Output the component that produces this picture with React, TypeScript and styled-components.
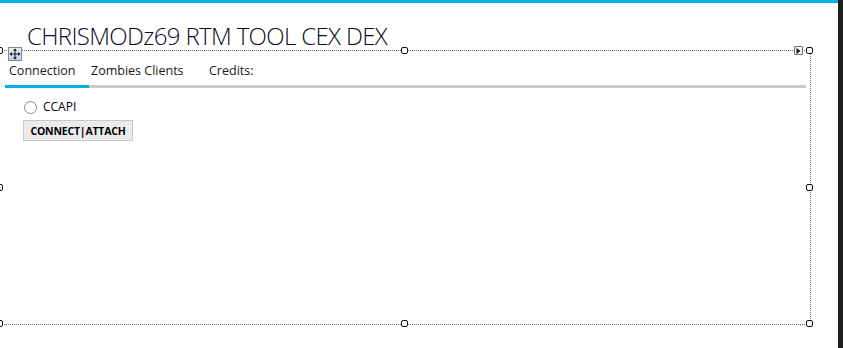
import React from "react";
import styled, { createGlobalStyle } from "styled-components";

const Global = createGlobalStyle`
  html, body { margin: 0; padding: 0; background: #ffffff; }
  body { font-family: "Open Sans", "Noto Sans", sans-serif; color: #000; }
`;

const Screen = styled.div`
  display: grid;
  grid-template-columns: 1fr 5px;
  width: 843px;
  height: 348px;
  overflow: hidden;
`;

const DarkStrip = styled.div`
  background: #1e1e1e;
`;

const Main = styled.div`
  display: flex;
  flex-direction: column;
`;

const TopBar = styled.div`
  height: 3px;
  background: #00aedf;
`;

const Stage = styled.div`
  position: relative;
  flex: 1;
`;

const Title = styled.h1`
  margin: 0;
  padding: 17px 0 0 27px;
  font-size: 24px;
  line-height: 32px;
  font-weight: 300;
  letter-spacing: -0.65px;
  color: #0c0c1c;
  white-space: nowrap;
`;

const Tabs = styled.div`
  display: flex;
  margin: 9px 0 0 5px;
  width: 801px;
  border-bottom: 3px solid #cccccc;
`;

const Tab = styled.div<{ $w?: number; $pad: number; $active?: boolean }>`
  ${(p) => (p.$w ? `width: ${p.$w}px;` : "flex: 1;")}
  box-sizing: border-box;
  padding: 0 0 4px ${(p) => p.$pad}px;
  margin-bottom: -3px;
  border-bottom: 3px solid ${(p) => (p.$active ? "#00aedf" : "transparent")};
  font-family: "Open Sans", "Noto Sans", sans-serif;
  font-size: 12.5px;
  line-height: 20px;
  color: #1a1a1a;
  white-space: nowrap;
`;

const Panel = styled.div`
  display: flex;
  flex-direction: column;
  align-items: flex-start;
  gap: 5px;
  padding: 11px 0 0 23px;
`;

const RadioRow = styled.label`
  display: flex;
  align-items: center;
  gap: 6px;
  font-family: "Open Sans", "Noto Sans", sans-serif;
  font-size: 12px;
  line-height: 16px;
  color: #000;
`;

const RadioDot = styled.span`
  width: 11px;
  height: 11px;
  margin-left: 1px;
  border: 1px solid #8a8a8a;
  border-radius: 50%;
  background: #fff;
`;

const Button = styled.button`
  width: 110px;
  height: 21px;
  padding: 0;
  border: 1px solid #c8c8c8;
  background: #ececec;
  font-family: "Open Sans", "Noto Sans", sans-serif;
  font-size: 10.5px;
  font-weight: 700;
  letter-spacing: -0.2px;
  color: #000;
`;

/* designer selection adornments, drawn over the form */
const Frame = styled.div`
  position: absolute;
  left: 0;
  top: 47px;
  width: 811px;
  height: 275px;
  box-sizing: border-box;
  border-top: 1px dotted #6e6e6e;
  border-bottom: 1px dotted #6e6e6e;
  border-right: 1px dotted #6e6e6e;
  pointer-events: none;
`;

const Handle = styled.span<{ $x: string; $y: string }>`
  position: absolute;
  left: ${(p) => p.$x};
  top: ${(p) => p.$y};
  width: 7px;
  height: 7px;
  margin: -4px 0 0 -4px;
  box-sizing: border-box;
  border: 1.5px solid #111;
  border-radius: 2px;
  background: #fff;
`;

const MoveGlyph = styled.span`
  position: absolute;
  left: 8px;
  top: -4px;
  width: 14px;
  height: 14px;
  box-sizing: border-box;
  border: 1px solid #7d8aa0;
  background: linear-gradient(#e8f0fb, #c3d3ea);
  display: flex;
  align-items: center;
  justify-content: center;
`;

const SmartTag = styled.span`
  position: absolute;
  right: 7px;
  top: -5px;
  width: 9px;
  height: 9px;
  box-sizing: border-box;
  border: 1px solid #6f6f66;
  border-radius: 1px;
  background: #f4f4f0;
  display: flex;
  align-items: center;
  justify-content: center;
`;

const handles: [string, string][] = [
  ["0px", "0px"], ["50%", "0px"], ["100%", "0px"],
  ["0px", "50%"], ["100%", "50%"],
  ["0px", "100%"], ["50%", "100%"], ["100%", "100%"],
];

const App = (): JSX.Element => {
  return (
    <Screen>
      <Global />
      <Main>
        <TopBar />
        <Stage>
          <Title>CHRISMODz69 RTM TOOL CEX DEX</Title>
          <Tabs>
            <Tab $w={84} $pad={4} $active>Connection</Tab>
            <Tab $w={118} $pad={2}>Zombies Clients</Tab>
            <Tab $pad={2}>Credits:</Tab>
          </Tabs>
          <Panel>
            <RadioRow>
              <RadioDot />
              CCAPI
            </RadioRow>
            <Button>CONNECT|ATTACH</Button>
          </Panel>
          <Frame>
            {handles.map(([x, y], i) => (
              <Handle key={i} $x={x} $y={y} />
            ))}
            <MoveGlyph>
              <svg width="12" height="12" viewBox="0 0 12 12">
                <path d="M6 1v10M1 6h10" stroke="#1a1a1a" strokeWidth="1" />
                <path d="M6 0.5L4 2.8h4zM6 11.5L4 9.2h4zM0.5 6L2.8 4v4zM11.5 6L9.2 4v4z" fill="#1a1a1a" />
              </svg>
            </MoveGlyph>
            <SmartTag>
              <svg width="5" height="6" viewBox="0 0 5 6">
                <path d="M0.5 0L4.5 3L0.5 6z" fill="#111" />
              </svg>
            </SmartTag>
          </Frame>
        </Stage>
      </Main>
      <DarkStrip />
    </Screen>
  );
};

export default App;
